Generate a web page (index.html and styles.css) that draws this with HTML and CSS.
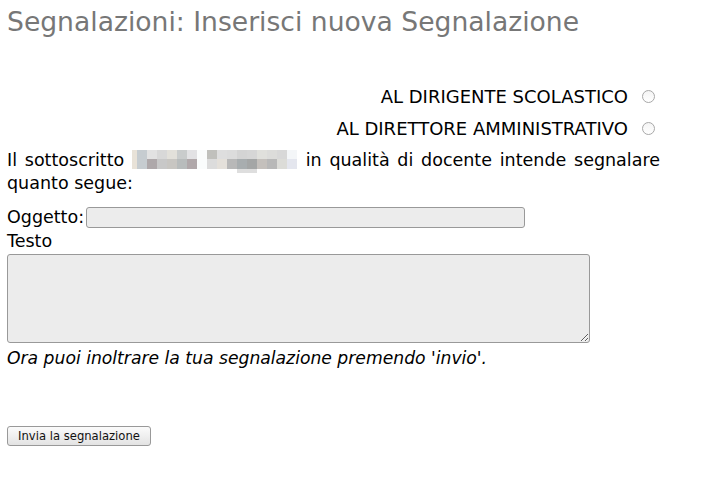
FILE: index.html
```html
<!doctype html>
<html lang="it">
<head>
    <meta charset="UTF-8">
    <meta name="viewport" content="width=device-width, initial-scale=1.0">
    <link rel="stylesheet" href="styles.css">
    <title>Segnalazioni</title>
</head>
<body>
<section class="page">
    <h1 class="page-title">Segnalazioni: Inserisci nuova Segnalazione</h1>

    <form class="report-form">
        <div class="recipients">
            <label class="recipient">AL DIRIGENTE SCOLASTICO <input type="radio" name="dest" value="ds"></label>
            <label class="recipient">AL DIRETTORE AMMINISTRATIVO <input type="radio" name="dest" value="dsga"></label>
        </div>

        <p class="intro">Il sottoscritto <svg class="blurred" width="166" height="23" viewBox="0 0 166 23">
            <rect x="0" y="0" width="5" height="19" fill="#e8e2d8"/>
            <rect x="5" y="0" width="10" height="19" fill="#c6ccd0"/>
            <rect x="15" y="0" width="10" height="9" fill="#e2e2e2"/>
            <rect x="25" y="0" width="10" height="9" fill="#d8d8d8"/>
            <rect x="35" y="0" width="10" height="9" fill="#e2e0da"/>
            <rect x="45" y="0" width="10" height="9" fill="#c9cccc"/>
            <rect x="55" y="0" width="10" height="9" fill="#e2e2e4"/>
            <rect x="15" y="9" width="10" height="10" fill="#aea8aa"/>
            <rect x="25" y="9" width="10" height="10" fill="#c8c8c8"/>
            <rect x="35" y="9" width="10" height="10" fill="#c8c6c2"/>
            <rect x="45" y="9" width="10" height="10" fill="#b8bcbc"/>
            <rect x="55" y="9" width="10" height="10" fill="#b0a8aa"/>
            <rect x="65" y="0" width="10" height="19" fill="#fafcfc"/>
            <rect x="75" y="0" width="10" height="9" fill="#c0c0bc"/>
            <rect x="85" y="0" width="10" height="9" fill="#dedede"/>
            <rect x="95" y="0" width="10" height="9" fill="#dcdcdc"/>
            <rect x="105" y="0" width="10" height="9" fill="#d4d4d4"/>
            <rect x="115" y="0" width="10" height="9" fill="#d6d6d6"/>
            <rect x="125" y="0" width="10" height="9" fill="#e0e0dc"/>
            <rect x="135" y="0" width="10" height="9" fill="#dcdcda"/>
            <rect x="145" y="0" width="10" height="9" fill="#d8d8d8"/>
            <rect x="155" y="0" width="10" height="19" fill="#f4f6f8"/>
            <rect x="75" y="9" width="10" height="10" fill="#dcdcdc"/>
            <rect x="85" y="9" width="10" height="10" fill="#e4e0da"/>
            <rect x="95" y="9" width="10" height="10" fill="#b8b8b8"/>
            <rect x="105" y="9" width="10" height="10" fill="#a8adaf"/>
            <rect x="115" y="9" width="10" height="10" fill="#a4a6a6"/>
            <rect x="125" y="9" width="10" height="10" fill="#c4c0bc"/>
            <rect x="135" y="9" width="10" height="10" fill="#b8b8b8"/>
            <rect x="145" y="9" width="10" height="10" fill="#dcdcd8"/>
            <rect x="155" y="9" width="10" height="10" fill="#e4e6ee"/>
            <rect x="105" y="19" width="20" height="4" fill="#dedede"/>
        </svg> in qualità di docente intende segnalare quanto segue:</p>

        <div class="field field-inline">
            <label for="oggetto">Oggetto:</label>
            <input type="text" id="oggetto" class="subject">
        </div>
        <div class="field">
            <label for="testo" class="field-label">Testo</label>
            <textarea id="testo" class="body-text"></textarea>
        </div>

        <p class="hint">Ora puoi inoltrare la tua segnalazione premendo 'invio'.</p>

        <button type="submit" class="send">Invia la segnalazione</button>
    </form>
</section>
</body>
</html>
```

FILE: styles.css
```css
* {
    box-sizing: border-box;
}

body {
    margin: 0;
    color: #000;
    background: #fff;
    font-family: 'DejaVu Sans', Verdana, sans-serif;
    font-size: 17.5px;
}

.page {
    width: 653px;
    padding: 6px 0 0;
    margin-left: 7px;
}

.page-title {
    margin: 0;
    color: #777;
    font-size: 26.6px;
    font-weight: normal;
    line-height: 32px;
}

.report-form {
    margin-top: 48px;
}

.recipients {
    display: flex;
    flex-direction: column;
    align-items: flex-end;
    gap: 11px;
}

.recipient {
    display: flex;
    align-items: center;
    gap: 14px;
    font-size: 18px;
    line-height: 21px;
}

.recipient input {
    appearance: none;
    -webkit-appearance: none;
    width: 13px;
    height: 13px;
    margin: 0 5px 0 0;
    border: 1px solid #a8a8a8;
    border-radius: 50%;
    background: linear-gradient(#f4f4f4, #fff);
}

.intro {
    margin: 11px 0 0;
    text-align: justify;
    line-height: 21px;
}

.blurred {
    vertical-align: -7px;
}

.field-inline {
    display: flex;
    align-items: center;
    margin-top: 13px;
    gap: 2px;
}

.field label {
    display: block;
    line-height: 21px;
}

.field .field-label {
    margin: 3px 0 2px;
}

.subject {
    width: 439px;
    height: 21px;
    padding: 0 4px;
    border: 1px solid #999;
    border-radius: 3px;
    background: #ececec;
    font: inherit;
}

.body-text {
    display: block;
    width: 583px;
    height: 89px;
    margin: 0;
    border: 1px solid #999;
    border-radius: 3px;
    background: #ececec;
    resize: both;
    font: inherit;
}

.hint {
    margin: 5px 0 0;
    font-size: 17.2px;
    font-style: italic;
    line-height: 21px;
}

.send {
    display: block;
    margin-top: 57px;
    width: 144px;
    height: 20px;
    padding: 0;
    border: 1px solid #999;
    border-radius: 3px;
    background: linear-gradient(#fbfbfb, #e3e3e3);
    color: #111;
    font-family: 'DejaVu Sans', Verdana, sans-serif;
    font-size: 11.6px;
}
```
